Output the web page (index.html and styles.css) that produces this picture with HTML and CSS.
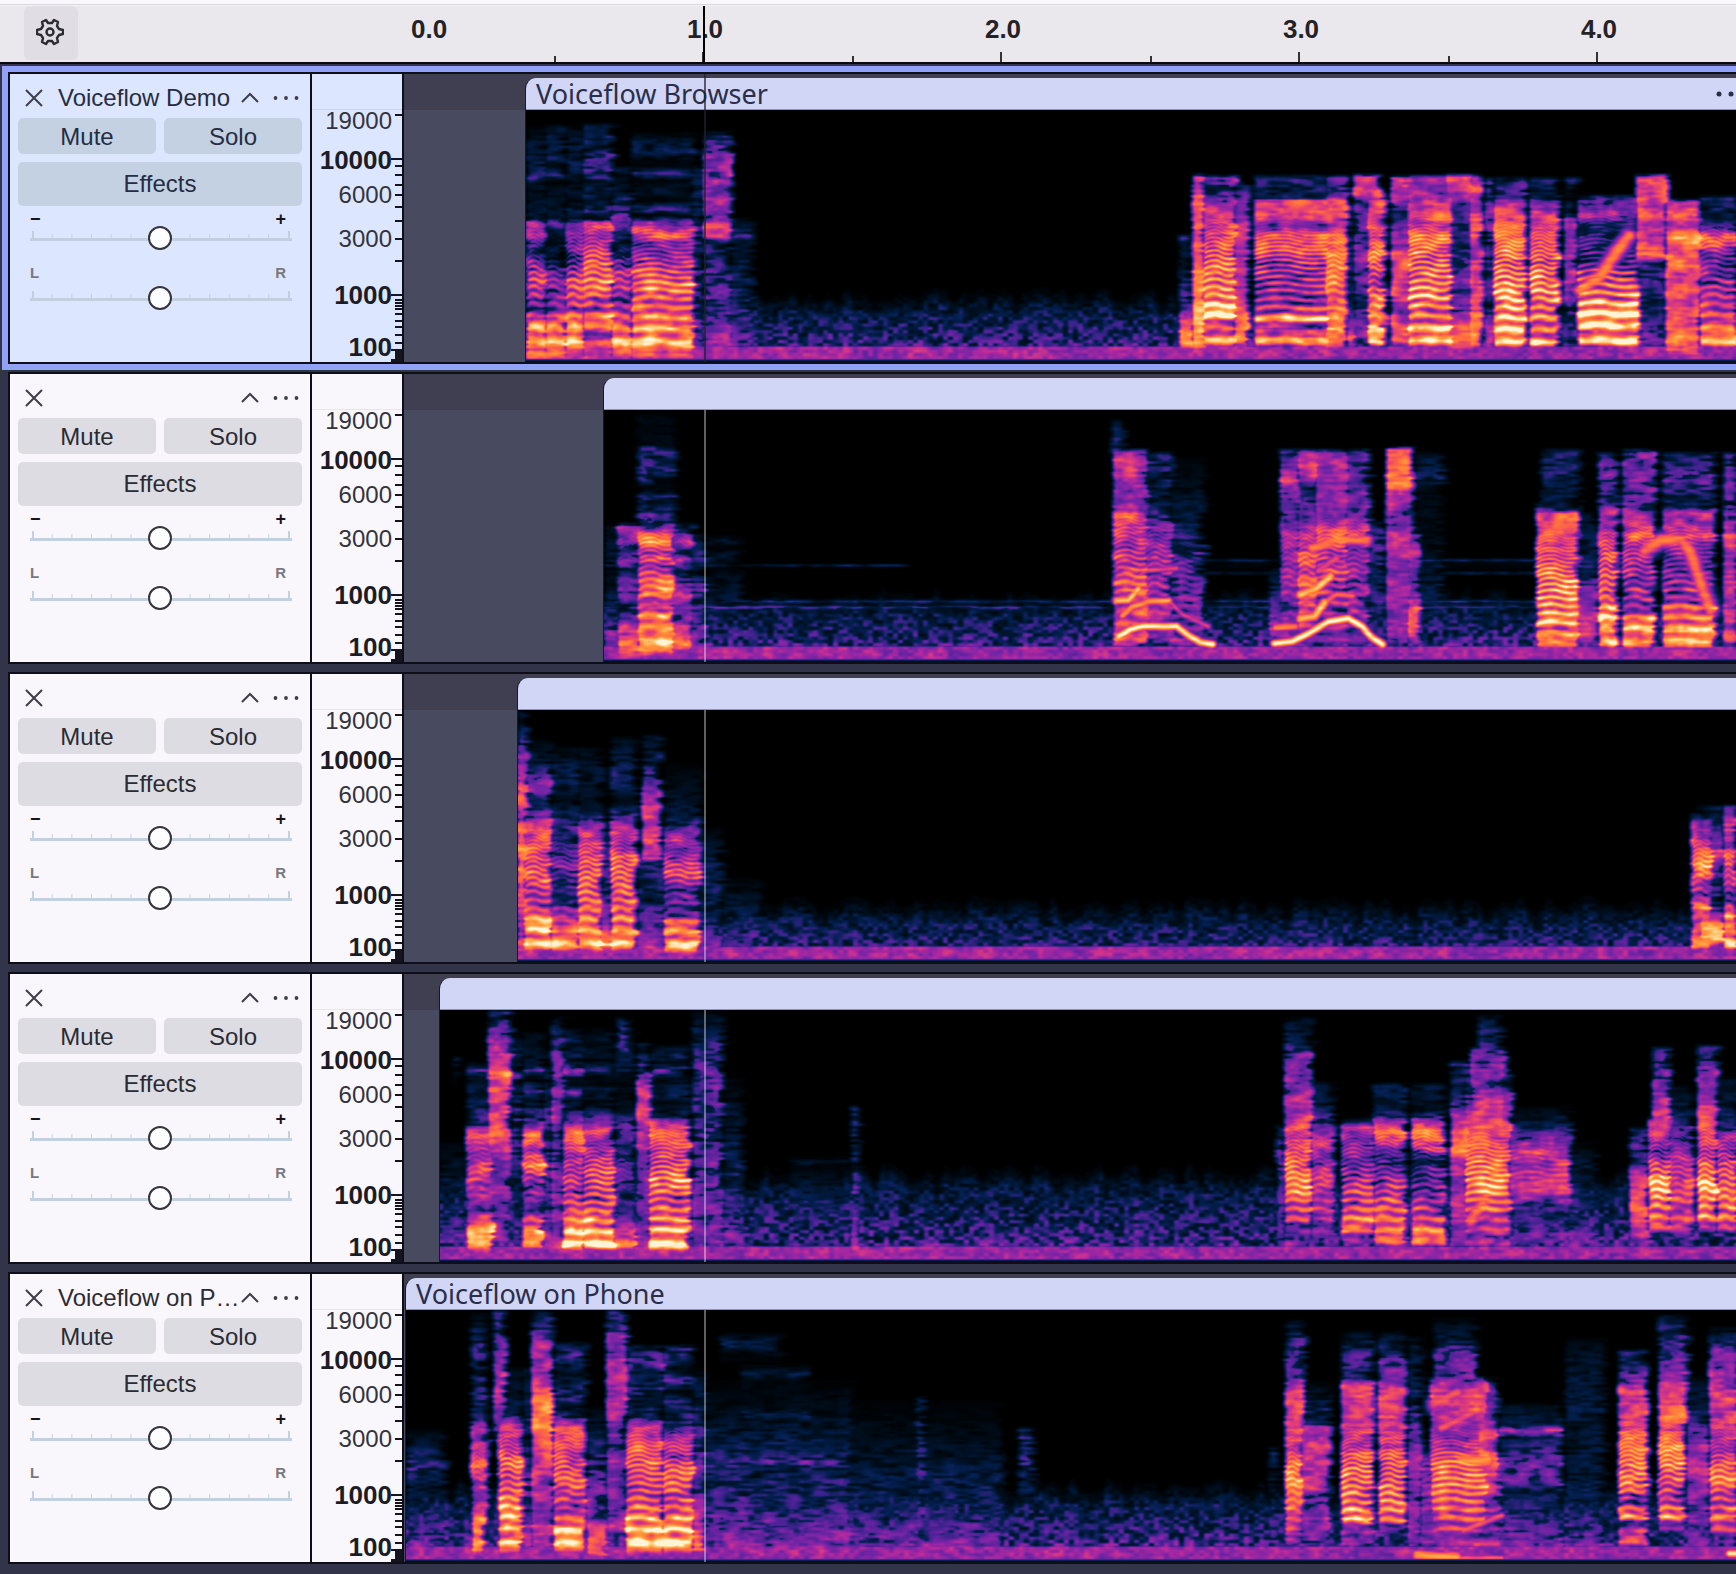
FILE: index.html
```html
<!DOCTYPE html>
<html lang="en">
<head>
<meta charset="utf-8">
<meta name="viewport" content="width=device-width, initial-scale=1">
<title>Voiceflow Demo</title>
<link rel="stylesheet" href="styles.css">
</head>
<body>
<svg class="defs" aria-hidden="true">
  <symbol id="close" viewBox="0 0 18 18"><path d="M1 1L17 17M17 1L1 17" fill="none" stroke="currentColor" stroke-width="2"/></symbol>
  <symbol id="caret" viewBox="0 0 18 18"><path d="M1 13L9 5L17 13" fill="none" stroke="currentColor" stroke-width="2"/></symbol>
  <symbol id="dots" viewBox="0 0 28 18"><g fill="currentColor"><circle cx="3.500" cy="9" r="1.900"/><circle cx="14" cy="9" r="1.900"/><circle cx="24.500" cy="9" r="1.900"/></g></symbol>
  <symbol id="scale" viewBox="0 0 11 288"><path d="M4 41h7M0 85h11M4 92h7M4 101h7M4 111h7M4 121h7M4 133h7M4 147h7M4 165h7M4 187h7M0 221h11M4 226h7M4 229h7M4 232h7M4 235h7M4 240h7M4 247h7M4 253h7M4 261h7M4 269h7M0 276h11" fill="none" stroke="currentColor" stroke-width="2"/><path d="M4 277h7v11H0v-3h4z" fill="currentColor"/></symbol>
</svg>

<header class="timebar">
  <div class="timebar-tools">
    <button class="gear" type="button" aria-label="Timeline options">
      <svg width="28" height="28" viewBox="0 0 28 28" fill="none" stroke="currentColor" stroke-width="2.400" stroke-linejoin="round"><path d="M10 2L12 5H16L18 2L22 4L21 8L23 11L27 12V16L23 17L21 20L22 24L18 26L16 23H12L10 26L6 24L7 20L5 17L1 16V12L5 11L7 8L6 4Z"/><circle cx="14" cy="14" r="3.500"/></svg>
    </button>
  </div>
  <div class="timeline">
    <span class="second first">0.0</span>
    <span class="second">1.0</span>
    <span class="second">2.0</span>
    <span class="second">3.0</span>
    <span class="second">4.0</span>
    <i class="cursor"></i>
  </div>
</header>

<main class="tracks">
  <section class="track selected">
    <div class="panel">
      <div class="panel-head">
        <button type="button" class="icon" aria-label="Close track"><svg width="18" height="18"><use href="#close"/></svg></button>
        <h2>Voiceflow Demo</h2>
        <button type="button" class="icon" aria-label="Collapse"><svg width="18" height="18"><use href="#caret"/></svg></button>
        <button type="button" class="icon" aria-label="Track menu"><svg width="28" height="18"><use href="#dots"/></svg></button>
      </div>
      <div class="buttons"><button type="button">Mute</button><button type="button">Solo</button><button type="button" class="effects">Effects</button></div>
      <label class="gain"><span class="ends"><b>−</b><b>+</b></span><input type="range" aria-label="Gain"></label>
      <label class="pan"><span class="ends"><span>L</span><span>R</span></span><input type="range" aria-label="Pan"></label>
    </div>
    <div class="scale"><ol><li>19000</li><li class="major">10000</li><li>6000</li><li>3000</li><li class="major">1000</li><li class="major">100</li></ol><svg width="11" height="288"><use href="#scale"/></svg></div>
    <div class="lane"><div class="clip start-a"><div class="clip-head"><h3>Voiceflow Browser</h3><svg class="clip-menu" width="36" height="6" viewBox="0 0 36 6"><circle cx="3" cy="3" r="2.500"/><circle cx="15" cy="3" r="2.500"/><circle cx="27" cy="3" r="2.500"/></svg></div><canvas></canvas></div><i class="playhead"></i></div>
  </section>

  <section class="track">
    <div class="panel">
      <div class="panel-head">
        <button type="button" class="icon" aria-label="Close track"><svg width="18" height="18"><use href="#close"/></svg></button>
        <h2></h2>
        <button type="button" class="icon" aria-label="Collapse"><svg width="18" height="18"><use href="#caret"/></svg></button>
        <button type="button" class="icon" aria-label="Track menu"><svg width="28" height="18"><use href="#dots"/></svg></button>
      </div>
      <div class="buttons"><button type="button">Mute</button><button type="button">Solo</button><button type="button" class="effects">Effects</button></div>
      <label class="gain"><span class="ends"><b>−</b><b>+</b></span><input type="range" aria-label="Gain"></label>
      <label class="pan"><span class="ends"><span>L</span><span>R</span></span><input type="range" aria-label="Pan"></label>
    </div>
    <div class="scale"><ol><li>19000</li><li class="major">10000</li><li>6000</li><li>3000</li><li class="major">1000</li><li class="major">100</li></ol><svg width="11" height="288"><use href="#scale"/></svg></div>
    <div class="lane"><div class="clip start-b"><div class="clip-head"></div><canvas></canvas></div><i class="playhead"></i></div>
  </section>

  <section class="track">
    <div class="panel">
      <div class="panel-head">
        <button type="button" class="icon" aria-label="Close track"><svg width="18" height="18"><use href="#close"/></svg></button>
        <h2></h2>
        <button type="button" class="icon" aria-label="Collapse"><svg width="18" height="18"><use href="#caret"/></svg></button>
        <button type="button" class="icon" aria-label="Track menu"><svg width="28" height="18"><use href="#dots"/></svg></button>
      </div>
      <div class="buttons"><button type="button">Mute</button><button type="button">Solo</button><button type="button" class="effects">Effects</button></div>
      <label class="gain"><span class="ends"><b>−</b><b>+</b></span><input type="range" aria-label="Gain"></label>
      <label class="pan"><span class="ends"><span>L</span><span>R</span></span><input type="range" aria-label="Pan"></label>
    </div>
    <div class="scale"><ol><li>19000</li><li class="major">10000</li><li>6000</li><li>3000</li><li class="major">1000</li><li class="major">100</li></ol><svg width="11" height="288"><use href="#scale"/></svg></div>
    <div class="lane"><div class="clip start-c"><div class="clip-head"></div><canvas></canvas></div><i class="playhead"></i></div>
  </section>

  <section class="track">
    <div class="panel">
      <div class="panel-head">
        <button type="button" class="icon" aria-label="Close track"><svg width="18" height="18"><use href="#close"/></svg></button>
        <h2></h2>
        <button type="button" class="icon" aria-label="Collapse"><svg width="18" height="18"><use href="#caret"/></svg></button>
        <button type="button" class="icon" aria-label="Track menu"><svg width="28" height="18"><use href="#dots"/></svg></button>
      </div>
      <div class="buttons"><button type="button">Mute</button><button type="button">Solo</button><button type="button" class="effects">Effects</button></div>
      <label class="gain"><span class="ends"><b>−</b><b>+</b></span><input type="range" aria-label="Gain"></label>
      <label class="pan"><span class="ends"><span>L</span><span>R</span></span><input type="range" aria-label="Pan"></label>
    </div>
    <div class="scale"><ol><li>19000</li><li class="major">10000</li><li>6000</li><li>3000</li><li class="major">1000</li><li class="major">100</li></ol><svg width="11" height="288"><use href="#scale"/></svg></div>
    <div class="lane"><div class="clip start-d"><div class="clip-head"></div><canvas></canvas></div><i class="playhead"></i></div>
  </section>

  <section class="track">
    <div class="panel">
      <div class="panel-head">
        <button type="button" class="icon" aria-label="Close track"><svg width="18" height="18"><use href="#close"/></svg></button>
        <h2>Voiceflow on P…</h2>
        <button type="button" class="icon" aria-label="Collapse"><svg width="18" height="18"><use href="#caret"/></svg></button>
        <button type="button" class="icon" aria-label="Track menu"><svg width="28" height="18"><use href="#dots"/></svg></button>
      </div>
      <div class="buttons"><button type="button">Mute</button><button type="button">Solo</button><button type="button" class="effects">Effects</button></div>
      <label class="gain"><span class="ends"><b>−</b><b>+</b></span><input type="range" aria-label="Gain"></label>
      <label class="pan"><span class="ends"><span>L</span><span>R</span></span><input type="range" aria-label="Pan"></label>
    </div>
    <div class="scale"><ol><li>19000</li><li class="major">10000</li><li>6000</li><li>3000</li><li class="major">1000</li><li class="major">100</li></ol><svg width="11" height="288"><use href="#scale"/></svg></div>
    <div class="lane"><div class="clip start-e"><div class="clip-head"><h3>Voiceflow on Phone</h3></div><canvas></canvas></div><i class="playhead"></i></div>
  </section>
</main>
<script src="spectrogram.js"></script>
</body>
</html>
```
FILE: styles.css
```css
* { box-sizing: border-box; }

body {
  margin: 0;
  min-height: 100vh;
  overflow-x: hidden;
  background: #32344a;
  color: #2b2b33;
  font: 24px/28px "Liberation Sans", Arial, sans-serif;
}

button { margin: 0; padding: 0; border: 0; background: none; color: inherit; font: inherit; }
h2, h3, ol { margin: 0; padding: 0; font: inherit; list-style: none; }
svg, canvas { display: block; }
.defs { position: absolute; width: 0; height: 0; }

/* Time ruler */
.timebar {
  display: flex;
  height: 64px;
  padding-top: 6px;
  border-bottom: 2px solid #08080f;
  background: linear-gradient(#f9f7fc 4px, #d9d7dc 4px, #d9d7dc 5px, #f4f2f7 5px, #f4f2f7 6px, #eae8ed 6px);
}
.timebar-tools { width: 404px; padding-left: 24px; }
.gear {
  display: grid;
  place-items: center;
  width: 54px;
  height: 54px;
  padding: 0 2px 2px 0;
  border-radius: 6px;
  background: #e0dee4;
}
.timeline { position: relative; display: flex; flex: 1; min-width: 0; overflow: hidden; }
.second {
  flex: none;
  width: 298px;
  padding: 9px 0 0 4px;
  text-align: center;
  font-size: 26px;
  font-weight: bold;
  color: #222227;
  background:
    linear-gradient(#333, #333) 50% 100% / 2px 10px no-repeat,
    linear-gradient(#333, #333) 0 100% / 2px 6px no-repeat;
}
.second.first { width: 150px; padding-left: 7px; text-align: left; background: none; }
.cursor { position: absolute; top: 0; bottom: 0; left: 299px; width: 2px; background: #000; }

/* Tracks */
.tracks { padding-top: 2px; padding-bottom: 4px; }
.track {
  --panel: #f9f7fc;
  --button: #dedce3;
  --rail: #bfd2e4;
  --line: #0d0e18;
  display: grid;
  grid-template-columns: 304px 92px minmax(0, 1fr);
  position: relative;
  margin-left: 2px;
  border: 6px solid transparent;
  border-right: 0;
}
.track + .track { margin-top: -4px; }
.track.selected { --panel: #dde6ff; --button: #c3d1e3; --rail: #c3cfdf; border-color: #91a3f7; }
.panel, .scale, .lane { height: 292px; border: solid var(--line); border-width: 2px 0; }
.panel { padding: 4px 8px 0; border-width: 2px; background: var(--panel); }

.panel-head { display: flex; align-items: center; height: 40px; padding: 0 2px 0 7px; }
.panel-head h2 { flex: 1; min-width: 0; margin: 0 2px 0 15px; white-space: nowrap; }
.icon { color: #3e3e4a; }
.icon:last-child { margin-left: 13px; }
.selected .panel { color: #262d42; }

.buttons { display: grid; grid-template-columns: 1fr 1fr; gap: 8px; }
.buttons button { height: 36px; padding-top: 2px; border-radius: 5px; background: var(--button); }
.buttons .effects { grid-column: span 2; height: 44px; padding-top: 0; }

.gain, .pan { display: flex; flex-direction: column; padding: 0 10px; }
.gain { margin-top: 6px; }
.pan { gap: 6px; margin-top: 16px; }
.ends {
  display: flex;
  justify-content: space-between;
  padding: 0 6px 0 2px;
  font-size: 15px;
  font-weight: bold;
  line-height: 14px;
  color: #78787f;
}
.ends b { color: #15151c; font-size: 18px; }
input[type="range"] {
  appearance: none;
  width: 100%;
  height: 24px;
  margin: 0;
  padding: 0 4px;
  background:
    linear-gradient(var(--rail), var(--rail)) 100% 12px / calc(100% - 2px) 3px no-repeat border-box,
    linear-gradient(var(--rail), var(--rail)) 4px 5px / 2px 8px no-repeat border-box,
    linear-gradient(var(--rail), var(--rail)) calc(100% - 2px) 5px / 2px 8px no-repeat border-box,
    linear-gradient(90deg, var(--rail) 1px, transparent 1px) 0 8px / 20px 4px round no-repeat content-box border-box;
}
input[type="range"]::-webkit-slider-thumb {
  appearance: none;
  width: 24px;
  height: 24px;
  border: 2px solid #33343c;
  border-radius: 50%;
  background: #fdfcff;
}

.scale {
  display: flex;
  border-right: 2px solid var(--line);
  background: linear-gradient(transparent 35px, #00000012 35px, #00000012 36px, transparent 36px) var(--panel);
  color: #33333c;
}
.scale ol {
  flex: 1;
  display: grid;
  grid-template-rows: 39px 35px 44px 56px 52px 27px;
  margin-right: -1px;
  padding-top: 35px;
  text-align: right;
  line-height: 24px;
}
.scale .major { font-size: 26px; font-weight: bold; color: #1c1c26; }
.scale svg { color: #15151f; flex: none; }

/* Clips */
.lane {
  position: relative;
  overflow: hidden;
  padding-top: 4px;
  background: linear-gradient(#403f52 36px, #484a5f 36px);
}
.clip { border-left: 1px solid #16172a; border-radius: 11px 0 0; overflow: hidden; }
.start-a { margin-left: 121px; }
.start-b { margin-left: 199px; }
.start-c { margin-left: 113px; }
.start-d { margin-left: 35px; }
.start-e { margin-left: 1px; }
.clip-head {
  display: flex;
  align-items: center;
  justify-content: space-between;
  height: 32px;
  padding-left: 10px;
  border-bottom: 1px solid #9194ae;
  background: #d1d6f7;
  color: #2b2e48;
}
.clip-head h3 { font-family: "Noto Sans", "Open Sans", sans-serif; font-size: 27px; white-space: nowrap; }
.clip-menu { flex: none; margin-right: -16px; fill: currentColor; }
.clip canvas { width: 100%; height: 252px; background: #000; }
.playhead { position: absolute; top: 36px; bottom: 0; left: 300px; width: 2px; background: #ffffff60; }
.selected .playhead { top: 0; background: #22222eb0; }
```
FILE: spectrogram.js
```js
// Voice events per clip. Each row: start x, end x, pitch in Hz (0 = unvoiced),
// harmonic depth, then pairs of (y, level 0-100) going down the frequency axis.
const CLIPS = [
  { x: 526, floor: 190, level: .9, seg: [
    [527,546,190,.3, 14,0,28,10,55,16,68,32,74,8,108,12,112,50,128,55,133,30,150,45,170,74,200,50,213,92,243,88,249,45],
    [546,566,190,.3, 18,12,48,22,56,8,65,26,70,5,108,12,112,45,120,18,145,15,158,42,180,50,200,48,215,88,243,85,249,45],
    [566,585,190,.35, 18,8,45,18,64,26,72,4,82,12,90,4,99,24,108,8,112,48,128,56,150,52,170,76,200,58,212,90,228,90,240,92,249,45],
    [583,612,190,.35, 16,18,28,28,36,12,48,38,64,46,72,8,82,26,90,8,99,36,108,8,112,62,128,60,150,76,170,84,200,62,212,98,228,50,240,92,249,45],
    [612,632,190,.3, 60,20,66,5,112,45,122,28,140,22,152,50,170,60,200,46,215,84,240,90,249,45],
    [632,694,180,.35, 26,8,42,22,50,3,56,3,63,26,70,3,80,12,90,2,99,34,105,6,112,50,126,74,132,50,150,60,176,88,190,75,215,88,240,95,249,45],
    [692,703,0,0, 60,15,110,20,150,30,200,36,240,45],
    [704,730,0,0, 20,0,26,33,63,46,95,48,110,46,114,72,118,58,126,60,130,28,170,34,210,38,238,50],
    [730,752,0,0, 106,0,126,32,130,10,165,20,200,26,240,45],
    [1180,1193,0,0, 128,30,132,10,170,20,195,42,225,85,233,90,240,45],
    [1193,1205,0,0, 67,72,95,76,130,76,180,86,205,90,232,88,240,45],
    [1203,1236,190,.4, 68,45,80,26,90,50,105,68,125,78,160,88,185,88,206,106,215,60,228,95,237,50],
    [1234,1248,0,0, 75,20,95,45,125,60,180,60,228,85,237,50],
    [1255,1330,175,.45, 68,28,88,22,90,68,108,68,115,42,125,76,138,82,155,58,185,56,200,68,210,104,218,46,228,102,237,50],
    [1326,1347,175,.2, 68,45,86,30,90,66,108,68,115,50,125,74,150,80,200,78,215,92,235,70,240,50],
    [1347,1357,0,0, 90,8,120,28,200,24,230,80,238,50],
    [1354,1380,0,0, 67,68,85,64,92,40,110,35,150,50,190,28,225,50],
    [1368,1384,185,.3, 90,62,110,66,130,76,150,88,165,60,190,82,212,100,232,96,238,50],
    [1392,1412,0,0, 68,55,90,45,100,22,130,55,165,74,200,52,230,70],
    [1408,1452,185,.45, 68,50,88,56,106,76,112,58,127,92,150,76,180,98,205,82,230,102,238,50],
    [1446,1474,0,0, 67,72,80,66,92,38,120,30,160,38,200,44,230,78,238,50],
    [1470,1482,0,0, 68,68,95,46,125,76,140,45,160,62,200,68,232,88,238,50],
    [1485,1495,0,0, 70,30,100,45,140,30,200,30,235,70],
    [1494,1526,175,.45, 70,30,88,30,90,52,106,70,130,90,160,84,180,92,205,90,232,100,240,50],
    [1530,1558,175,.45, 70,25,84,12,90,48,105,72,130,78,160,88,180,96,210,78,232,96,240,45],
    [1565,1575,0,0, 70,25,85,5,110,45,150,50,200,38],
    [1578,1638,200,.5, 88,38,105,55,115,30,150,34,162,70,185,84,206,106,220,94,232,100,240,40],
    [1637,1666,0,0, 67,64,85,68,95,62,106,80,115,62,128,62,144,76,152,35,200,22,230,40],
    [1666,1700,0,0, 92,55,105,82,115,50,128,92,140,62,155,88,163,66,195,66,200,76,230,78,243,66,248,30],
    [1700,1736,190,.3, 88,25,108,18,122,62,130,78,145,45,180,60,210,78,232,98,240,45]],
    line: [[82,8,1580,180,1600,166,1614,144,1628,126]] },
  { x: 604, floor: 190, level: .9, seg: [
    [605,620,0,0, 118,6,150,14,152,2,175,10,197,28,225,42,238,55],
    [618,642,190,.1, 116,42,130,52,140,22,150,54,160,18,170,50,182,48,195,20,215,54,235,84,245,60],
    [638,674,190,.25, 7,4,36,6,42,30,52,8,62,36,70,6,78,4,86,30,92,8,102,40,112,30,120,52,132,92,142,54,148,86,155,60,170,84,182,90,192,58,205,86,222,92,240,98,246,50],
    [640,656,0,0, 38,30,50,30,58,36,68,38,76,6,86,28,100,40,112,40],
    [672,692,190,.1, 116,22,132,62,140,22,149,58,160,20,170,36,185,62,200,40,215,62,238,80],
    [690,706,0,0, 125,12,148,30,156,10,180,34,200,30,238,58],
    [704,740,0,0, 124,0,130,14,138,2,148,16,155,4,170,10,200,20],
    [604,900,0,0, 152,0,153,2,155,20,157,2,160,0],
    [604,1112,0,0, 187,0,189,6,191,26,194,8,197,38,200,12],
    [1112,1122,0,0, 12,12,40,32],
    [1114,1148,210,.25, 42,48,50,58,70,52,84,46,100,50,103,70,120,64,140,62,155,70,175,76,200,68,225,80,236,50],
    [1146,1172,200,.25, 45,30,60,34,75,22,90,12,102,35,125,48,160,54,190,58,225,55],
    [1170,1202,180,.2, 50,3,75,6,100,16,130,26,150,38,190,44,230,50],
    [1180,1540,0,0, 147,0,148,4,150,26,152,4,160,1,163,16,165,1,188,0,191,30,193,8,197,28,199,5],
    [1270,1290,0,0, 160,8,200,42,225,52],
    [1281,1300,200,.15, 42,40,58,46,72,60,80,46,88,50,96,30,125,56,150,48,175,50,205,48,230,45],
    [1298,1318,200,.2, 42,44,58,66,66,60,76,26,90,28,108,46,125,58,150,70,175,76,205,72,230,45],
    [1316,1348,200,.25, 42,46,58,52,70,50,88,50,108,52,125,78,140,66,170,62,205,52,230,45],
    [1346,1368,200,.2, 42,36,58,38,70,38,88,40,108,48,125,72,140,48,170,54,205,52,230,45],
    [1368,1384,0,0, 115,20,125,38,160,22,200,28],
    [1387,1411,0,0, 40,72,52,70,60,82,76,80,82,50,120,52,150,50,200,46,230,45],
    [1408,1420,0,0, 125,42,150,55,180,38,205,74,225,74,232,40],
    [1414,1442,0,0, 45,12,65,22,80,6,120,6,200,22],
    [1537,1578,150,.4, 96,18,100,38,103,70,120,72,150,76,180,96,200,82,213,98,222,68,229,104,236,60],
    [1542,1578,0,0, 42,20,60,26,75,18,95,24],
    [1578,1598,0,0, 105,14,150,20,190,46,230,55],
    [1599,1617,180,.35, 45,32,65,44,95,30,102,62,120,60,150,80,180,76,213,102,235,90],
    [1623,1654,180,.35, 42,40,70,44,95,35,105,52,125,74,150,58,200,56,213,96,235,86],
    [1663,1714,180,.35, 45,26,70,40,95,24,103,60,110,52,125,66,145,48,180,56,205,76,225,98,236,80],
    [1724,1736,0,0, 45,38,100,40,120,64,160,50,230,64]],
    line: [[108,4,1118,226,1130,219,1142,216,1176,216,1188,225,1200,232,1212,234],[96,4,1116,190,1128,190,1138,178],[88,4,1122,205,1132,196,1148,191,1168,190],[66,3,1168,190,1182,204,1208,216],[70,3,1124,176,1146,160,1176,158],
      [108,4,1274,233,1292,231,1308,223,1328,211,1348,208,1362,216,1370,226,1382,234],[80,7,1312,138,1340,128,1366,130],[84,4,1275,217,1295,216],[98,5,1300,184,1316,178,1330,166],[98,5,1300,208,1314,206,1324,192],[78,4,1324,192,1336,184,1352,186],[72,5,1318,160,1336,148],[80,8,1644,140,1660,130,1680,129,1690,142,1702,178,1710,200]] },
  { x: 518, floor: 198, level: .8, seg: [
    [518,527,0,0, 5,18,35,40,60,50,78,74,95,66,110,66,160,82,200,55,240,62],
    [524,551,170,.3, 30,3,55,18,68,42,80,46,96,14,110,64,130,66,150,76,165,86,185,62,205,68,213,100,225,90,238,94,246,45],
    [551,580,170,.25, 40,6,60,18,75,18,90,8,110,28,130,38,155,52,185,26,205,60,225,84,238,94,246,45],
    [578,602,170,.35, 40,8,60,12,100,10,118,52,130,64,150,72,170,80,200,74,210,90,225,90,238,96,246,45],
    [600,613,0,0, 120,12,150,30,200,42,235,80],
    [611,636,170,.35, 30,8,65,26,90,4,105,28,118,56,140,62,148,84,180,76,210,94,225,86,238,96,246,45],
    [636,668,170,.1, 150,22,180,34,190,12,200,40,220,34,240,60],
    [643,661,0,0, 28,12,45,22,56,26,75,45,90,68,110,56,130,68,148,58,152,18],
    [664,700,160,.3, 55,2,105,14,118,42,130,60,140,40,150,64,162,78,175,46,200,38,213,86,230,88,240,98,246,40],
    [698,722,0,0, 120,4,150,18,200,24,240,52],
    [722,760,0,0, 170,4,200,14,240,46],
    [1692,1712,180,.2, 106,26,112,54,130,66,156,88,170,64,186,56,194,88,208,68,236,86],
    [1700,1724,0,0, 98,20,108,12,120,36,140,56,170,24,200,44,218,96,232,92],
    [1724,1736,180,.2, 98,46,118,70,135,56,150,86,170,60,190,58,206,96,220,76,236,96]],
    line: [] },
  { x: 439, floor: 166, level: .95, seg: [
    [438,466,0,0, 135,4,190,18,230,44],
    [453,457,0,0, 50,16,75,14,78,0],
    [466,492,190,.15, 55,10,60,35,66,8,112,34,125,66,135,48,160,72,175,45,205,56,222,102,235,90,243,60],
    [488,509,0,0, 2,26,30,50,55,62,65,82,72,64,90,66,105,72,125,66,150,42,175,48,200,38,230,52],
    [510,521,0,0, 25,6,60,18,66,38,72,10,110,34,150,25,200,18,230,35],
    [522,542,170,.2, 25,6,55,12,60,44,66,8,82,32,90,8,112,40,124,84,140,58,156,82,170,54,200,32,220,100,235,84],
    [542,552,0,0, 60,15,120,30,200,30,235,55],
    [551,562,0,0, 10,10,30,30,60,36,100,56,115,50,130,40,200,44,240,55],
    [562,584,160,.3, 22,12,30,20,34,4,45,22,50,4,60,54,68,10,75,4,82,38,90,8,112,45,122,86,140,70,160,66,190,60,212,80,222,106,236,98,242,55],
    [582,613,160,.4, 22,8,30,12,34,3,45,14,50,4,60,30,66,5,75,4,82,34,90,6,112,40,120,76,132,46,145,62,160,76,190,72,212,86,222,98,236,100,242,55],
    [613,635,160,.15, 22,4,60,20,68,4,100,10,118,40,140,26,170,42,200,28,225,70,236,85],
    [617,627,0,0, 10,30,35,34,45,8],
    [636,650,0,0, 35,16,60,34,85,64,105,62,120,52,200,44,240,52],
    [648,688,170,.4, 38,12,48,20,52,3,60,38,68,6,85,20,92,6,105,20,112,66,125,82,138,64,150,74,168,90,190,68,210,84,222,98,238,102,244,55],
    [692,722,0,0, 2,4,20,16,40,34,120,34,180,40,240,50],
    [722,740,0,0, 70,4,150,20,200,30,240,48],
    [790,850,0,0, 148,2,152,14,156,3,175,12,210,24],
    [851,857,0,0, 98,22,150,28,190,36,215,46,240,50],
    [1276,1284,0,0, 118,25,170,45,235,42],
    [1284,1310,170,.3, 10,10,34,22,45,46,100,54,118,72,125,58,135,80,160,86,180,90,195,62,210,80,218,42,236,45],
    [1311,1332,170,.15, 75,14,100,20,115,42,135,64,145,52,175,62,185,46,210,55,230,42],
    [1341,1374,170,.35, 110,12,117,52,140,62,150,40,178,74,195,70,207,94,222,66,235,40],
    [1373,1404,170,.35, 76,16,100,18,108,42,120,84,130,68,140,42,160,38,178,68,205,76,228,88,236,40],
    [1411,1444,170,.35, 76,16,100,10,108,44,120,80,138,76,146,28,180,54,200,58,210,76,228,90,236,42],
    [1450,1468,0,0, 54,28,80,16,114,64,122,80,142,82,152,50,210,55,236,45],
    [1478,1498,0,0, 8,12,20,26,30,22,40,40],
    [1470,1502,170,.15, 40,40,80,50,100,60,120,66,140,64,155,66],
    [1464,1510,170,.35, 66,24,100,56,120,66,140,76,155,86,178,98,195,74,212,66,235,45],
    [1508,1568,170,.12, 100,6,114,20,122,42,140,58,165,64,178,70,186,44,200,30,235,40],
    [1566,1594,0,0, 134,4,150,14,190,22,240,42],
    [1629,1646,0,0, 120,26,150,34,175,66,210,68,225,50],
    [1652,1667,0,0, 40,30,60,38,80,48,110,62,130,62],
    [1648,1670,180,.35, 110,50,120,60,145,58,160,82,178,106,200,78,213,80,220,48],
    [1668,1692,170,.2, 78,8,110,20,120,42,150,54,170,70,210,66,225,45],
    [1697,1716,180,.35, 38,30,60,44,100,62,125,70,145,64,160,88,178,102,200,84,213,74,220,50],
    [1716,1736,180,.35, 70,8,110,24,130,56,160,82,180,78,210,84,222,45]],
    line: [[78,8,1498,150,1488,180,1470,210]] },
  { x: 405, floor: 180, level: .95, seg: [
    [407,444,0,0, 120,2,140,20,160,32,175,12,200,22,240,45],
    [471,485,170,.1, 5,6,40,32,55,20,110,28,120,56,160,66,190,40,200,62,220,98,240,92],
    [493,503,0,0, 3,24,40,46,70,62,90,62,105,46,118,40],
    [498,522,180,.35, 60,6,100,18,110,44,125,64,150,84,175,80,205,104,215,82,240,96],
    [522,532,0,0, 60,10,125,30,200,30,236,65],
    [531,551,0,0, 3,18,25,36,30,52,70,58,84,80,115,82,135,72,155,62,180,44,235,60],
    [553,584,170,.3, 35,20,45,34,65,12,80,32,100,16,112,48,118,72,150,70,170,78,200,56,222,104,240,84],
    [586,606,0,0, 100,6,150,35,210,45,222,76,242,82],
    [606,625,0,0, 2,26,30,50,60,56,105,52,120,38,160,42,220,48],
    [625,662,175,.35, 38,28,55,40,62,14,80,34,90,12,105,26,115,64,140,80,160,72,185,66,215,96,240,100],
    [662,692,175,.35, 38,32,48,34,58,6,70,34,80,8,92,26,110,24,125,58,150,68,168,84,185,70,220,96,240,98],
    [692,704,0,0, 60,6,110,24,180,44,215,60,238,85],
    [702,850,0,0, 70,1,110,10,130,18,144,22,152,36,158,24,185,28,215,40,240,50],
    [845,1000,0,0, 90,1,130,8,160,16,200,24,240,45],
    [720,780,0,0, 26,6,34,20,42,6],
    [740,810,0,0, 58,6,64,19,70,4,98,6,104,20,112,8],
    [915,923,0,0, 90,20,200,32,235,42],
    [1018,1032,0,0, 120,20,150,38,165,30,180,16],
    [1269,1276,0,0, 140,18,230,34],
    [1285,1302,170,.2, 14,18,50,38,75,60,100,64,140,70,158,94,190,76,230,58],
    [1300,1328,0,0, 75,6,100,22,113,24,116,54,150,60,178,62,186,30,205,50,230,42],
    [1341,1372,165,.4, 24,8,42,28,68,36,76,62,110,60,140,68,158,84,190,84,213,92,220,42,228,70],
    [1378,1405,165,.4, 24,12,44,22,48,44,70,38,80,64,110,56,125,72,160,78,190,86,212,76,220,34],
    [1407,1420,0,0, 30,12,80,20,120,40,160,48,230,52],
    [1420,1500,170,.2, 140,14,155,45,200,56,235,50],
    [1434,1474,170,.2, 10,4,30,18,45,42,60,42,75,50],
    [1430,1486,170,.35, 70,46,84,62,100,64,125,52,140,64,152,80,170,84,200,78,225,50],
    [1478,1496,0,0, 70,20,90,44,120,58,150,70,190,55],
    [1498,1560,0,0, 96,8,114,18,120,54,127,24,148,40,170,40,180,18,210,34,240,44],
    [1565,1602,0,0, 30,4,60,16,150,14,200,22,240,42],
    [1618,1646,175,.35, 42,24,55,32,75,58,110,62,122,80,160,84,180,86,190,44,205,92,215,38,226,82,234,50],
    [1658,1684,175,.35, 8,18,40,36,75,60,100,80,118,64,135,90,160,84,185,60,207,94,220,42],
    [1686,1708,0,0, 70,8,110,22,118,48,160,56,200,40,235,48],
    [1709,1736,175,.3, 20,12,46,44,75,56,100,66,140,64,155,86,175,82,190,60,205,84,220,55]],
    line: [[74,7,1432,94,1456,82],[86,9,1460,150,1486,150],[70,6,1440,118,1472,102],[72,4,1462,220,1500,205],[94,6,1416,245,1455,247],[74,4,1455,248,1500,248],[100,4,1728,243,1736,243]] }
];

const RAMP = [[0,0,0,0],[10,0,16,34],[22,4,32,82],[34,62,34,142],[46,118,36,166],[57,176,40,158],[67,228,62,118],[78,255,106,64],[88,255,148,58],[97,255,196,108],[107,255,244,214]];

function color(v) {
  let i = 1;
  while (i < RAMP.length - 1 && RAMP[i][0] < v) i++;
  const a = RAMP[i - 1], b = RAMP[i];
  const t = Math.min(1, Math.max(0, (v - a[0]) / (b[0] - a[0])));
  return [1, 2, 3].map(k => a[k] + (b[k] - a[k]) * t);
}
const LUT = Array.from({ length: 111 }, (_, i) => color(i));

function hash(x, y) {
  let h = Math.imul(x, 374761393) + Math.imul(y, 668265263) | 0;
  h = Math.imul(h ^ (h >>> 13), 1274126177);
  return ((h ^ (h >>> 16)) >>> 0) / 4294967295;
}
function noise(x, y) {
  const i = Math.floor(x), j = Math.floor(y);
  let u = x - i, w = y - j;
  u = u * u * (3 - 2 * u);
  w = w * w * (3 - 2 * w);
  const a = hash(i, j), b = hash(i + 1, j), c = hash(i, j + 1), d = hash(i + 1, j + 1);
  return a + (b - a) * u + (c - a + (a - b - c + d) * u) * w;
}
const clamp = v => Math.min(1, Math.max(0, v));

// Mel-scaled axis: frequency shown at a given row.
const FREQ = Array.from({ length: 260 }, (_, y) => 700 * (Math.exp(Math.max(0, 249 - y) / 0.0647 / 1127) - 1));

function profile(s) {
  const out = new Float32Array(260);
  for (let y = 0; y < 260; y++) {
    const first = s[4], last = s[s.length - 2];
    if (y < first) { out[y] = s[5] * clamp(1 - (first - y) / 5); continue; }
    if (y >= last) { out[y] = s[s.length - 1] * clamp(1 - (y - last) / 12); continue; }
    let k = 4;
    while (s[k + 2] <= y) k += 2;
    out[y] = s[k + 1] + (s[k + 3] - s[k + 1]) * (y - s[k]) / (s[k + 2] - s[k]);
  }
  return out;
}

function near(px, py, l) {
  let best = 1e9;
  for (let k = 2; k + 3 < l.length; k += 2) {
    const ax = l[k], ay = l[k + 1], bx = l[k + 2] - ax, by = l[k + 3] - ay;
    const t = clamp(((px - ax) * bx + (py - ay) * by) / (bx * bx + by * by || 1));
    best = Math.min(best, Math.hypot(px - ax - bx * t, py - ay - by * t));
  }
  return best;
}

function draw(canvas, clip, index) {
  const w = canvas.width = canvas.clientWidth, h = canvas.height = canvas.clientHeight;
  const ctx = canvas.getContext("2d"), img = ctx.createImageData(w, h);
  const seed = index * 997;
  const segs = clip.seg.map(s => ({ s, p: profile(s) }));
  const field = new Float32Array(w * h);
  for (let cx = 0; cx < w; cx++) {
    const x = clip.x + cx;
    const live = segs.filter(g => x > g.s[0] - 12 && x < g.s[1] + 14);
    const top = clip.floor - 6 + (noise(x / 9 + seed, 5) - .5) * 16;
    for (let y = 0; y < h; y++) {
      const n = noise(x / 5 + seed, y / 3.3), m = noise(x / 12 + seed, y / 2.6 + 90);
      const big = noise(x / 13 + seed, y / 9 + 40);
      let v = 0;
      if (y > top) v = (12 + 24 * clamp((y - top) / (236 - top))) * (1.5 * n + .2) * clip.level * clamp((y - top) / 22 + .1);
      if (y > 234) v = Math.max(v, clamp((y - 234) / 3) * (53 + (n - .5) * 18 + (big - .5) * 12));
      for (const g of live) {
        let q = g.p[y];
        if (q < 1) continue;
        const [a, b, f0, amp] = g.s;
        // Quiet energy has ragged, wide edges; loud energy starts sharply.
        const quiet = q < 40, wob = (m - .5) * (quiet ? 10 : 6) + (big - .5) * 5;
        const edge = clamp((x - a + 4 + wob * .4) / (quiet ? 7 : 5)) * clamp((b + 5 + wob - x) / (quiet ? 11 : 8));
        if (f0) {
          const t = (x - a) / (b - a), pitch = f0 * (1.06 - .13 * Math.abs(t - .45) + .03 * Math.sin(t * 7));
          const gap = pitch * 72.9 / (700 + FREQ[y]);
          q += amp * 46 * (Math.cos(6.283 * FREQ[y] / pitch) - .4) * clamp((gap - 2.5) / 2.5) * clamp(q / 60);
        }
        q += ((n - .5) * 12 + (m - .5) * 18 + (big - .5) * 24) * clamp(q / 34);
        if (q < 36) q *= clamp(.4 + m * 1.1);
        v = Math.max(v, q * edge);
      }
      for (const l of clip.line) {
        const d = near(x, y, l);
        if (d < l[1] * 2) v = Math.max(v, l[0] * Math.exp(-d * d / (l[1] * l[1] * 1.6)) + (m - .5) * 14);
      }
      if (y > 248) v = Math.min(v, 50 - (y - 248) * 14);
      field[y * w + cx] = Math.min(112, Math.max(0, v));
    }
  }
  for (let y = 0; y < h; y++) {
    const up = Math.max(0, y - 1) * w, mid = y * w, down = Math.min(h - 1, y + 1) * w;
    for (let x = 0; x < w; x++) {
      const l = Math.max(0, x - 1), r = Math.min(w - 1, x + 1);
      const v = field[mid + x] * .34 + (field[mid + l] + field[mid + r]) * .18 + (field[up + x] + field[down + x]) * .09
        + (field[up + l] + field[up + r] + field[down + l] + field[down + r]) * .03;
      const c = LUT[Math.round(Math.min(108, v))], o = (mid + x) * 4;
      img.data[o] = c[0]; img.data[o + 1] = c[1]; img.data[o + 2] = c[2]; img.data[o + 3] = 255;
    }
  }
  ctx.putImageData(img, 0, 0);
}

function drawAll() {
  document.querySelectorAll(".clip canvas").forEach((c, i) => draw(c, CLIPS[i], i));
}
drawAll();
addEventListener("resize", drawAll);
```
